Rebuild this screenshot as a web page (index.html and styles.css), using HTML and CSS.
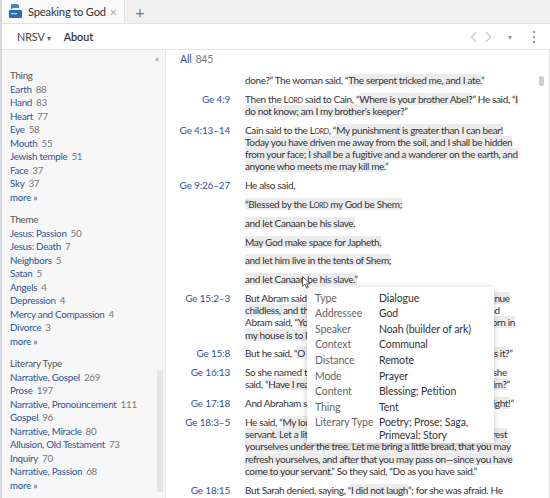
FILE: index.html
```html
<!DOCTYPE html>
<html>
<head>
<meta charset="utf-8">
<link rel="stylesheet" href="styles.css">
</head>
<body>
<div class="app">
  <div class="tabbar">
    <div class="tab">
      <svg class="logo" width="14" height="15" viewBox="0 0 14 15">
        <rect x="0" y="7" width="13" height="8" rx="1" fill="#2f6db5"/>
        <path d="M2 1 h6 a2 2 0 0 1 2 2 v2 h-6 l-2 1.5 z" fill="#3d86d1"/>
        <rect x="2" y="10" width="6" height="1.2" fill="#bfd7f0"/>
      </svg>
      <span class="tab-title">Speaking to God</span>
      <span class="tab-close">×</span>
    </div>
    <div class="tab-add">+</div>
  </div>
  <div class="toolbar">
    <div class="tool">NRSV <span class="caret">▾</span></div>
    <div class="tool about">About</div>
    <div class="spacer"></div>
    <div class="navicons">
      <svg width="8" height="12" viewBox="0 0 8 12"><path d="M6 1 L1.5 6 L6 11" fill="none" stroke="#c8c8c8" stroke-width="1.2"/></svg>
      <svg width="8" height="12" viewBox="0 0 8 12"><path d="M2 1 L6.5 6 L2 11" fill="none" stroke="#c8c8c8" stroke-width="1.2"/></svg>
      <span class="navcaret">▾</span>
      <svg class="kebab" width="4" height="14" viewBox="0 0 4 14"><circle cx="2" cy="2" r="1.2" fill="#999"/><circle cx="2" cy="7" r="1.2" fill="#999"/><circle cx="2" cy="12" r="1.2" fill="#999"/></svg>
    </div>
  </div>
  <div class="body">
    <aside class="sidebar">
      <div class="collapse">«</div>
      <section class="facet">
        <div class="facet-title">Thing</div>
        <div class="item"><a>Earth</a><span class="n">88</span></div>
        <div class="item"><a>Hand</a><span class="n">83</span></div>
        <div class="item"><a>Heart</a><span class="n">77</span></div>
        <div class="item"><a>Eye</a><span class="n">58</span></div>
        <div class="item"><a>Mouth</a><span class="n">55</span></div>
        <div class="item"><a>Jewish temple</a><span class="n">51</span></div>
        <div class="item"><a>Face</a><span class="n">37</span></div>
        <div class="item"><a>Sky</a><span class="n">37</span></div>
        <div class="item"><a>more »</a></div>
      </section>
      <section class="facet">
        <div class="facet-title">Theme</div>
        <div class="item"><a>Jesus: Passion</a><span class="n">50</span></div>
        <div class="item"><a>Jesus: Death</a><span class="n">7</span></div>
        <div class="item"><a>Neighbors</a><span class="n">5</span></div>
        <div class="item"><a>Satan</a><span class="n">5</span></div>
        <div class="item"><a>Angels</a><span class="n">4</span></div>
        <div class="item"><a>Depression</a><span class="n">4</span></div>
        <div class="item"><a>Mercy and Compassion</a><span class="n">4</span></div>
        <div class="item"><a>Divorce</a><span class="n">3</span></div>
        <div class="item"><a>more »</a></div>
      </section>
      <section class="facet">
        <div class="facet-title">Literary Type</div>
        <div class="item"><a>Narrative, Gospel</a><span class="n">269</span></div>
        <div class="item"><a>Prose</a><span class="n">197</span></div>
        <div class="item"><a>Narrative, Pronouncement</a><span class="n">111</span></div>
        <div class="item"><a>Gospel</a><span class="n">96</span></div>
        <div class="item"><a>Narrative, Miracle</a><span class="n">80</span></div>
        <div class="item"><a>Allusion, Old Testament</a><span class="n">73</span></div>
        <div class="item"><a>Inquiry</a><span class="n">70</span></div>
        <div class="item"><a>Narrative, Passion</a><span class="n">68</span></div>
        <div class="item"><a>more »</a></div>
      </section>
      <div class="side-thumb"></div>
    </aside>
    <main class="content">
      <div class="all"><a>All</a><span class="n">845</span></div>
      <div class="list">
        <div class="row"><div class="ref"></div><p class="txt">done?” The woman said, “<span class="hl">The serpent tricked me, and I ate.</span>”</p></div>
        <div class="row"><div class="ref"><a>Ge 4:9</a></div><p class="txt">Then the <span class="sc">Lord</span> said to Cain, “<span class="hl">Where is your brother Abel?</span>” He said, “<span class="hl">I<br>do not know; am I my brother’s keeper?</span>”</p></div>
        <div class="row"><div class="ref"><a>Ge 4:13–14</a></div><p class="txt">Cain said to the <span class="sc">Lord</span>, “<span class="hl">My punishment is greater than I can bear!<br>Today you have driven me away from the soil, and I shall be hidden<br>from your face; I shall be a fugitive and a wanderer on the earth, and<br>anyone who meets me may kill me.</span>”</p></div>
        <div class="row"><div class="ref"><a>Ge 9:26–27</a></div><p class="txt">He also said,</p></div>
        <div class="row"><div class="ref"></div><p class="txt"><span class="hl">“Blessed by the <span class="sc">Lord</span> my God be Shem;</span></p></div>
        <div class="row"><div class="ref"></div><p class="txt"><span class="hl">and let Canaan be his slave.</span></p></div>
        <div class="row"><div class="ref"></div><p class="txt"><span class="hl">May God make space for Japheth,</span></p></div>
        <div class="row"><div class="ref"></div><p class="txt"><span class="hl">and let him live in the tents of Shem;</span></p></div>
        <div class="row"><div class="ref"></div><p class="txt"><span class="hl">and let Canaan be his slave.”</span></p></div>
        <div class="row"><div class="ref"><a>Ge 15:2–3</a></div><p class="txt">But Abram said, “<span class="hl">O Lord <span class="sc">God</span>, what will you give me, for I continue<br>childless, and the heir of my house is Eliezer of Damascus?</span>” And<br>Abram said, “<span class="hl">You have given me no offspring, and so a slave born in<br>my house is to be my heir.</span>”</p></div>
        <div class="row"><div class="ref"><a>Ge 15:8</a></div><p class="txt">But he said, “<span class="hl">O Lord <span class="sc">God</span>, how am I to know that I shall possess it?</span>”</p></div>
        <div class="row"><div class="ref"><a>Ge 16:13</a></div><p class="txt">So she named the <span class="sc">Lord</span> who spoke to her, “You are El-roi”; for she<br>said, “<span class="hl">Have I really seen God and remained alive after seeing him?</span>”</p></div>
        <div class="row"><div class="ref"><a>Ge 17:18</a></div><p class="txt">And Abraham said to God, “<span class="hl">O that Ishmael might live in your sight!</span>”</p></div>
        <div class="row"><div class="ref"><a>Ge 18:3–5</a></div><p class="txt">He said, “<span class="hl">My lord, if I find favor with you, do not pass by your<br>servant. Let a little water be brought, and wash your feet, and rest<br>yourselves under the tree. Let me bring a little bread, that you may<br>refresh yourselves, and after that you may pass on—since you have<br>come to your servant.</span>” So they said, “Do as you have said.”</p></div>
        <div class="row"><div class="ref"><a>Ge 18:15</a></div><p class="txt">But Sarah denied, saying, “<span class="hl">I did not laugh</span>”; for she was afraid. He<br>said, “Oh yes, you did laugh.”</p></div>
      </div>
      <div class="main-thumb"></div>
      <div class="tooltip">
        <div class="tt-row"><span class="tt-k">Type</span><span class="tt-v">Dialogue</span></div>
        <div class="tt-row"><span class="tt-k">Addressee</span><span class="tt-v">God</span></div>
        <div class="tt-row"><span class="tt-k">Speaker</span><span class="tt-v">Noah (builder of ark)</span></div>
        <div class="tt-row"><span class="tt-k">Context</span><span class="tt-v">Communal</span></div>
        <div class="tt-row"><span class="tt-k">Distance</span><span class="tt-v">Remote</span></div>
        <div class="tt-row"><span class="tt-k">Mode</span><span class="tt-v">Prayer</span></div>
        <div class="tt-row"><span class="tt-k">Content</span><span class="tt-v">Blessing; Petition</span></div>
        <div class="tt-row"><span class="tt-k">Thing</span><span class="tt-v">Tent</span></div>
        <div class="tt-row"><span class="tt-k">Literary Type</span><span class="tt-v">Poetry; Prose; Saga,<br>Primeval; Story</span></div>
      </div>
      <svg class="cursor" width="9" height="13" viewBox="0 0 9 13"><path d="M0.5 0.5 L0.5 10.5 L3 8.2 L4.8 12.2 L6.3 11.5 L4.6 7.7 L8 7.7 Z" fill="#fff" stroke="#333" stroke-width="0.8"/></svg>
    </main>
  </div>
</div>
</body>
</html>
```
FILE: styles.css
```css
* { box-sizing: border-box; }
html, body { margin: 0; padding: 0; }
body {
  width: 550px;
  height: 498px;
  overflow: hidden;
  background: #fff;
  font-family: "Lato", "Noto Sans", sans-serif;
  color: #333;
}
a { color: #2f5497; text-decoration: none; }
.app { width: 550px; height: 498px; display: flex; flex-direction: column; border-left: 2px solid #d5d9de; }

.tabbar {
  height: 24px;
  flex: none;
  background: #f0f0f0;
  display: flex;
  align-items: stretch;
  border-bottom: 1px solid #e2e2e2;
}
.tab {
  width: 123px;
  flex: none;
  background: #fafafa;
  display: flex;
  align-items: center;
  padding-left: 7px;
  border-right: 1px solid #e2e2e2;
}
.logo { margin-right: 5px; margin-top: -2px; flex: none; }
.tab-title { font-size: 11.2px; color: #333; letter-spacing: -0.2px; white-space: nowrap; }
.tab-close { margin-left: auto; margin-right: 7px; font-size: 13px; color: #aaa; }
.tab-add { width: 30px; display: flex; align-items: center; justify-content: center; font-size: 16px; color: #777; }

.toolbar {
  height: 26px;
  flex: none;
  display: flex;
  align-items: center;
  padding-left: 15px;
  border-bottom: 1px solid #e4e4e4;
  background: #fff;
}
.tool { font-size: 10.8px; color: #444; margin-right: 13px; letter-spacing: -0.1px; }
.tool .caret { font-size: 8px; color: #666; }
.about { color: #333; font-weight: 600; }
.spacer { flex: 1; }
.navicons { display: flex; align-items: center; gap: 6px; padding-right: 14px; }
.navcaret { font-size: 8px; color: #999; margin-left: 10px; margin-right: 14px; }

.body { flex: 1; display: flex; min-height: 0; }

.sidebar {
  position: relative;
  flex: none;
  width: 164px;
  background: #f7f7f7;
  border-right: 1px solid #e6e6e6;
  padding: 2px 0 0 8px;
  font-size: 9.8px;
  letter-spacing: -0.28px;
  overflow: hidden;
}
.collapse { text-align: right; padding-right: 6px; line-height: 13px; font-size: 10px; color: #888; }
.facet { margin-top: 4px; margin-bottom: 9px; }
.facet + .facet { margin-top: 0; }
.facet-title { line-height: 13.5px; color: #555; }
.item { line-height: 13.5px; white-space: nowrap; }
.n { color: #777; margin-left: 4px; }
.side-thumb {
  position: absolute;
  left: 155px;
  top: 320px;
  width: 6px;
  height: 122px;
  background: #e4e4e4;
  border-radius: 2px;
}

.content {
  position: relative;
  flex: 1;
  min-width: 0;
  overflow: hidden;
  padding-top: 2px;
  font-size: 10px;
  letter-spacing: -0.36px;
  border-right: 1px solid #e0e0e0;
}
.all { padding-left: 14px; line-height: 14px; font-size: 10.5px; letter-spacing: -0.2px; margin-bottom: 8px; }
.list { display: flex; flex-direction: column; gap: 6.6px; }
.row { display: grid; grid-template-columns: 64px 1fr; column-gap: 15px; }
.ref { text-align: right; line-height: 12.2px; white-space: nowrap; letter-spacing: -0.2px; }
.txt { margin: 0; line-height: 12.2px; white-space: nowrap; color: #333; }
.hl { background: #ececec; }
.sc { font-variant: small-caps; }

.main-thumb {
  position: absolute;
  left: 373px;
  top: 26px;
  width: 5px;
  height: 10px;
  background: #cfcfcf;
  border-radius: 2px;
}

.tooltip {
  position: absolute;
  left: 141px;
  top: 237px;
  width: 187px;
  background: #fff;
  box-shadow: 0 1px 6px rgba(0,0,0,0.22);
  padding: 3px 8px 1px 8px;
  font-size: 10.5px;
  letter-spacing: -0.1px;
}
.tt-row { display: grid; grid-template-columns: 64px 1fr; padding: 1.7px 0; line-height: 12.2px; }
.tt-k { color: #666; white-space: nowrap; }
.tt-v { color: #333; }
.cursor { position: absolute; left: 136px; top: 226px; }
```
